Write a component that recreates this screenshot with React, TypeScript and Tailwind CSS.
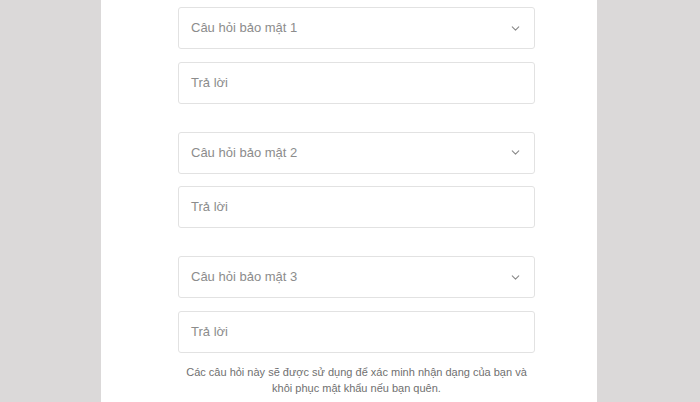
import { ChevronDown } from "lucide-react";

const font = { fontFamily: '"Liberation Sans", Arial, sans-serif' };

function SelectBox({ label }: { label: string }) {
  return (
    <div className="flex h-[42px] items-center justify-between rounded-[3px] border border-[#e2e2e2] bg-white pl-3 pr-[12px]">
      <span className="text-[13px] text-[#8c8c8c]">{label}</span>
      <ChevronDown className="h-[13px] w-[13px] text-[#8a8a8a]" strokeWidth={2} />
    </div>
  );
}

function AnswerBox() {
  return (
    <div className="flex h-[42px] items-center rounded-[3px] border border-[#e2e2e2] bg-white pl-3">
      <span className="text-[13px] text-[#8c8c8c]">Trả lời</span>
    </div>
  );
}

export default function App() {
  const groups = ["Câu hỏi bảo mật 1", "Câu hỏi bảo mật 2", "Câu hỏi bảo mật 3"];
  return (
    <div className="flex h-[402px] w-[700px] overflow-hidden bg-[#dbd9d9]" style={font}>
      <div className="w-[101px] shrink-0" />
      <div className="flex w-[496px] shrink-0 flex-col bg-white pl-[77px] pr-[62px] pt-[7px]">
        <div className="flex flex-col gap-[28px]">
          {groups.map((g) => (
            <div key={g} className="flex flex-col gap-[12.5px]">
              <SelectBox label={g} />
              <AnswerBox />
            </div>
          ))}
        </div>
        <p className="mt-[11px] whitespace-nowrap text-center text-[11px] leading-[16px] text-[#707070]">
          Các câu hỏi này sẽ được sử dụng để xác minh nhận dạng của bạn và
          <br />
          khôi phục mật khẩu nếu bạn quên.
        </p>
      </div>
      <div className="flex-1" />
    </div>
  );
}
